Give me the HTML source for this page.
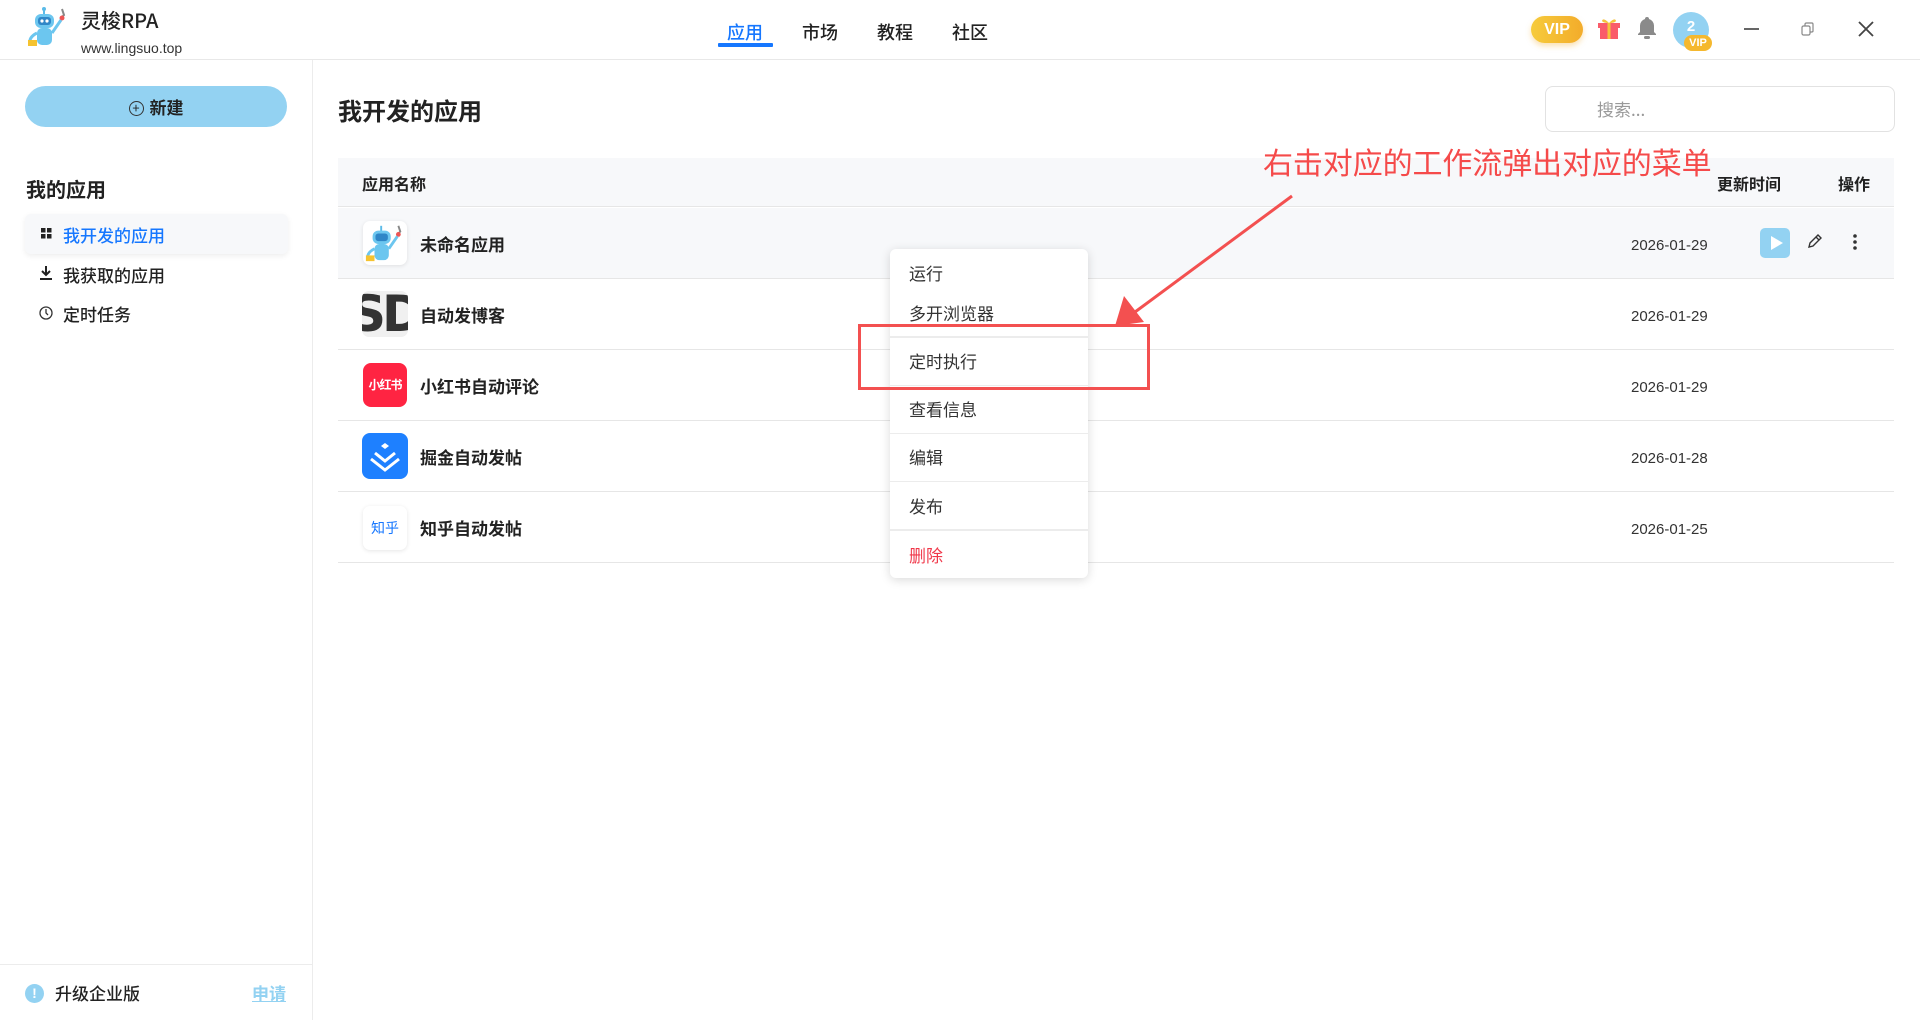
<!DOCTYPE html>
<html><head><meta charset="utf-8"><style>
*{margin:0;padding:0;box-sizing:border-box}
body{width:1920px;height:1020px;overflow:hidden;background:#fff;font-family:"Liberation Sans","Noto Sans CJK SC",sans-serif;color:#222;position:relative}
.a{position:absolute;white-space:nowrap}
.cn{font-family:"Noto Sans CJK SC","Liberation Sans",sans-serif}
.b{font-weight:700}
</style></head><body>
<!-- header -->
<div class="a" style="left:0;top:59px;width:1920px;height:1px;background:#e8e8e8"></div>
<svg class="a" style="left:26px;top:5px" width="44" height="44" viewBox="0 0 44 44">
<path d="M36 4l2 6-3 3" stroke="#888" stroke-width="2" fill="none"/><circle cx="36" cy="13" r="2.5" fill="#e55"/>
<line x1="18" y1="4" x2="18" y2="10" stroke="#5bbbe8" stroke-width="2"/><circle cx="18" cy="4" r="2" fill="#5bbbe8"/>
<rect x="9" y="9" width="19" height="14" rx="6" fill="#6cc6ef"/><rect x="12" y="12" width="13" height="8" rx="3" fill="#2f86c7"/>
<circle cx="16" cy="16" r="1.6" fill="#fff"/><circle cx="21" cy="16" r="1.6" fill="#fff"/>
<rect x="11" y="23" width="15" height="17" rx="5" fill="#6cc6ef"/><path d="M26 28 L35 15" stroke="#6cc6ef" stroke-width="3"/>
<path d="M11 28 Q3 32 4 38" stroke="#6cc6ef" stroke-width="3" fill="none"/><rect x="2" y="35" width="9" height="6" fill="#f5c330"/>
</svg>
<div class="a cn" style="left:81px;top:5px;font-size:20px;font-weight:500;color:#222">灵梭RPA</div>
<div class="a" style="left:81px;top:40px;font-size:14px;color:#333">www.lingsuo.top</div>
<div class="a cn" style="left:727px;top:19px;font-size:18px;color:#1677ff;font-weight:500">应用</div>
<div class="a" style="left:718px;top:43px;width:55px;height:4px;background:#1677ff;border-radius:1px"></div>
<div class="a cn" style="left:802px;top:19px;font-size:18px;font-weight:500">市场</div>
<div class="a cn" style="left:877px;top:19px;font-size:18px;font-weight:500">教程</div>
<div class="a cn" style="left:952px;top:19px;font-size:18px;font-weight:500">社区</div>
<div class="a b" style="left:1531px;top:16px;width:52px;height:27px;border-radius:14px;background:linear-gradient(90deg,#f6cb3b,#f3ac2b);color:#fff;font-size:16px;text-align:center;line-height:27px;box-shadow:0 3px 6px rgba(240,170,40,.35)">VIP</div>
<svg class="a" style="left:1597px;top:17px" width="24" height="22" viewBox="0 0 24 22"><rect x="1" y="6" width="22" height="5" fill="#fa5c6a"/><rect x="3" y="11" width="18" height="11" fill="#fa5c6a"/><rect x="10.5" y="6" width="3" height="16" fill="#f5c33b"/><path d="M12 6 Q6 0 5 4 Q6 6 12 6 Q18 6 19 4 Q18 0 12 6" fill="#f5c33b"/></svg>
<svg class="a" style="left:1637px;top:16px" width="20" height="23" viewBox="0 0 20 23"><path d="M10 1a2 2 0 0 1 2 2 7 7 0 0 1 5 7v6l2 2v1H1v-1l2-2v-6a7 7 0 0 1 5-7 2 2 0 0 1 2-2z" fill="#8a8a8a"/><rect x="7" y="20" width="6" height="3" rx="1.5" fill="#8a8a8a"/></svg>
<div class="a" style="left:1673px;top:12px;width:36px;height:36px;border-radius:50%;background:#93d2f2;color:#fff;font-size:15px;font-weight:700;text-align:center;line-height:30px">2</div>
<div class="a b" style="left:1684px;top:35px;width:28px;height:16px;border-radius:8px;background:#f5b82e;color:#fff;font-size:11px;text-align:center;line-height:16px">VIP</div>
<div class="a" style="left:1744px;top:28px;width:15px;height:1.5px;background:#666"></div>
<svg class="a" style="left:1801px;top:22px" width="13" height="14" viewBox="0 0 13 14"><rect x="1" y="4" width="8" height="9" rx="1.5" fill="none" stroke="#888" stroke-width="1.2"/><path d="M4 4V2.5Q4 1 5.5 1H11Q12 1 12 2.5V9Q12 10 10.5 10H9" fill="none" stroke="#888" stroke-width="1.2"/></svg>
<svg class="a" style="left:1858px;top:21px" width="16" height="16" viewBox="0 0 16 16"><path d="M1 1L15 15M15 1L1 15" stroke="#444" stroke-width="1.8"/></svg>

<!-- sidebar -->
<div class="a" style="left:312px;top:60px;width:1px;height:960px;background:#ececec"></div>
<div class="a cn b" style="left:25px;top:86px;width:262px;height:41px;border-radius:21px;background:#93d2f2;color:#222;font-size:17px;text-align:center;line-height:41px"><span style="display:inline-block;width:15px;height:15px;border:1.3px solid #333;border-radius:50%;font-size:13px;line-height:12px;font-weight:400;vertical-align:1px;margin-right:6px">+</span>新建</div>
<div class="a cn b" style="left:26px;top:174px;font-size:20px">我的应用</div>
<div class="a" style="left:25px;top:214px;width:263px;height:40px;border-radius:6px;background:#f7f8fa;box-shadow:0 2px 6px rgba(0,0,0,.07)"></div>
<svg class="a" style="left:41px;top:228px" width="11" height="11"><rect x="0" y="0" width="4.5" height="4.5" fill="#222"/><rect x="6" y="0" width="4.5" height="4.5" fill="#222"/><rect x="0" y="6" width="4.5" height="4.5" fill="#222"/><rect x="6" y="6" width="4.5" height="4.5" fill="#222"/></svg>
<div class="a cn" style="left:63px;top:222px;font-size:17px;color:#1677ff;font-weight:500">我开发的应用</div>
<svg class="a" style="left:40px;top:266px" width="12" height="15"><path d="M6 0v9M2 5l4 4 4-4" stroke="#222" stroke-width="2" fill="none"/><rect x="0" y="12" width="12" height="2" fill="#222"/></svg>
<div class="a cn" style="left:63px;top:262px;font-size:17px;font-weight:500">我获取的应用</div>
<svg class="a" style="left:39px;top:306px" width="14" height="14"><circle cx="7" cy="7" r="6" fill="none" stroke="#333" stroke-width="1.3"/><path d="M7 3v4l2 2" stroke="#333" stroke-width="1.3" fill="none"/></svg>
<div class="a cn" style="left:63px;top:301px;font-size:17px;font-weight:500">定时任务</div>
<div class="a" style="left:0;top:964px;width:312px;height:1px;background:#ececec"></div>
<div class="a b" style="left:25px;top:984px;width:19px;height:19px;border-radius:50%;background:#93d2f2;color:#fff;font-size:14px;text-align:center;line-height:19px">!</div>
<div class="a cn" style="left:55px;top:980px;font-size:17px;font-weight:500">升级企业版</div>
<div class="a cn b" style="left:252px;top:980px;font-size:17px;color:#93d2f2;text-decoration:underline">申请</div>

<!-- main -->
<div class="a cn b" style="left:338px;top:92px;font-size:24px">我开发的应用</div>
<div class="a" style="left:1545px;top:86px;width:350px;height:46px;border:1px solid #e2e2e2;border-radius:8px"></div>
<div class="a cn" style="left:1597px;top:96px;font-size:17px;color:#999">搜索...</div>
<div class="a" style="left:338px;top:158px;width:1556px;height:49px;background:#f7f8fa;border-bottom:1px solid #e6e6e6"></div>
<div class="a cn b" style="left:362px;top:171px;font-size:16px">应用名称</div>
<div class="a cn b" style="left:1717px;top:171px;font-size:16px">更新时间</div>
<div class="a cn b" style="left:1838px;top:171px;font-size:16px">操作</div>
<div class="a" style="left:338px;top:208px;width:1556px;height:70px;background:#f7f8fa"></div>
<div class="a" style="left:338px;top:278px;width:1556px;height:1px;background:#e6e6e6"></div>
<div class="a" style="left:338px;top:349px;width:1556px;height:1px;background:#e6e6e6"></div>
<div class="a" style="left:338px;top:420px;width:1556px;height:1px;background:#e6e6e6"></div>
<div class="a" style="left:338px;top:491px;width:1556px;height:1px;background:#e6e6e6"></div>
<div class="a" style="left:338px;top:562px;width:1556px;height:1px;background:#e6e6e6"></div>

<!-- icons -->
<div class="a" style="left:363px;top:221px;width:44px;height:44px;border-radius:7px;background:#fff;box-shadow:0 1px 4px rgba(0,0,0,.1)"></div>
<svg class="a" style="left:364px;top:222px" width="42" height="42" viewBox="0 0 44 44">
<path d="M36 4l2 6-3 3" stroke="#888" stroke-width="2" fill="none"/><circle cx="36" cy="13" r="2.5" fill="#e55"/>
<line x1="18" y1="4" x2="18" y2="10" stroke="#5bbbe8" stroke-width="2"/><rect x="9" y="9" width="19" height="14" rx="6" fill="#6cc6ef"/><rect x="12" y="12" width="13" height="8" rx="3" fill="#2f86c7"/>
<rect x="11" y="23" width="15" height="17" rx="5" fill="#6cc6ef"/><path d="M26 28 L35 15" stroke="#6cc6ef" stroke-width="3"/><path d="M11 28 Q3 32 4 38" stroke="#6cc6ef" stroke-width="3" fill="none"/><rect x="2" y="35" width="9" height="6" fill="#f5c330"/>
</svg>
<div class="a" style="left:362px;top:291px;width:46px;height:46px;border-radius:7px;background:#f0f0f0;overflow:hidden;font-family:'DejaVu Sans',sans-serif;font-weight:700;font-size:50px;line-height:46px;color:#333;letter-spacing:-4px;text-indent:-12px">SD</div>
<div class="a cn b" style="left:363px;top:363px;width:44px;height:44px;border-radius:8px;background:#ff2442;color:#fff;font-size:12px;text-align:center;line-height:44px;letter-spacing:-1px">小红书</div>
<div class="a" style="left:362px;top:433px;width:46px;height:46px;border-radius:8px;background:#1e80ff"></div>
<svg class="a" style="left:362px;top:433px" width="46" height="46"><path d="M23 10l4 3-4 3-4-3z" fill="#fff"/><path d="M13 20l10 8 10-8" stroke="#fff" stroke-width="3" fill="none"/><path d="M9 26l14 11 14-11" stroke="#fff" stroke-width="3" fill="none"/></svg>
<div class="a cn" style="left:363px;top:506px;width:44px;height:44px;border-radius:7px;background:#fff;box-shadow:0 1px 4px rgba(0,0,0,.1);color:#1677ff;font-size:14px;text-align:center;line-height:44px">知乎</div>

<div class="a cn b" style="left:420px;top:231px;font-size:17px">未命名应用</div>
<div class="a cn b" style="left:420px;top:302px;font-size:17px">自动发博客</div>
<div class="a cn b" style="left:420px;top:373px;font-size:17px">小红书自动评论</div>
<div class="a cn b" style="left:420px;top:444px;font-size:17px">掘金自动发帖</div>
<div class="a cn b" style="left:420px;top:515px;font-size:17px">知乎自动发帖</div>
<div class="a" style="left:1631px;top:237px;font-size:15px;color:#333">2026-01-29</div>
<div class="a" style="left:1631px;top:308px;font-size:15px;color:#333">2026-01-29</div>
<div class="a" style="left:1631px;top:379px;font-size:15px;color:#333">2026-01-29</div>
<div class="a" style="left:1631px;top:450px;font-size:15px;color:#333">2026-01-28</div>
<div class="a" style="left:1631px;top:521px;font-size:15px;color:#333">2026-01-25</div>
<div class="a" style="left:1760px;top:228px;width:30px;height:30px;border-radius:5px;background:#93d2f2"></div>
<svg class="a" style="left:1760px;top:228px" width="30" height="30"><path d="M11 8v14l12-7z" fill="#fff"/></svg>
<svg class="a" style="left:1806px;top:234px" width="16" height="16"><path d="M3 13l1-4 8-8 3 3-8 8z M10 3l3 3" stroke="#333" stroke-width="1.4" fill="none"/></svg>
<svg class="a" style="left:1852px;top:233px" width="6" height="18"><circle cx="3" cy="3" r="1.8" fill="#333"/><circle cx="3" cy="9" r="1.8" fill="#333"/><circle cx="3" cy="15" r="1.8" fill="#333"/></svg>

<!-- context menu -->
<div class="a" style="left:890px;top:249px;width:198px;height:329px;background:#fff;border-radius:6px;box-shadow:0 2px 10px rgba(0,0,0,.15)"></div>
<div class="a" style="left:890px;top:336px;width:198px;height:2px;background:#ececec"></div>
<div class="a" style="left:890px;top:385px;width:198px;height:1px;background:#ececec"></div>
<div class="a" style="left:890px;top:433px;width:198px;height:1px;background:#ececec"></div>
<div class="a" style="left:890px;top:481px;width:198px;height:1px;background:#ececec"></div>
<div class="a" style="left:890px;top:529px;width:198px;height:2px;background:#ececec"></div>
<div class="a cn" style="left:909px;top:260px;font-size:17px;color:#333">运行</div>
<div class="a cn" style="left:909px;top:300px;font-size:17px;color:#333">多开浏览器</div>
<div class="a cn" style="left:909px;top:348px;font-size:17px;color:#333">定时执行</div>
<div class="a cn" style="left:909px;top:396px;font-size:17px;color:#333">查看信息</div>
<div class="a cn" style="left:909px;top:444px;font-size:17px;color:#333">编辑</div>
<div class="a cn" style="left:909px;top:493px;font-size:17px;color:#333">发布</div>
<div class="a cn" style="left:909px;top:542px;font-size:17px;color:#f0384a">删除</div>

<!-- annotation -->
<div class="a" style="left:858px;top:324px;width:292px;height:66px;border:3.5px solid #f35050"></div>
<div class="a cn" style="left:1263px;top:139px;font-size:30px;color:#f54a4a;letter-spacing:-0.1px">右击对应的工作流弹出对应的菜单</div>
<svg class="a" style="left:0;top:0" width="1920" height="1020"><line x1="1292" y1="196" x2="1135" y2="312" stroke="#f35050" stroke-width="3"/><path d="M1115 326 L1124 296 L1144 322 Z" fill="#f35050"/></svg>
</body></html>
